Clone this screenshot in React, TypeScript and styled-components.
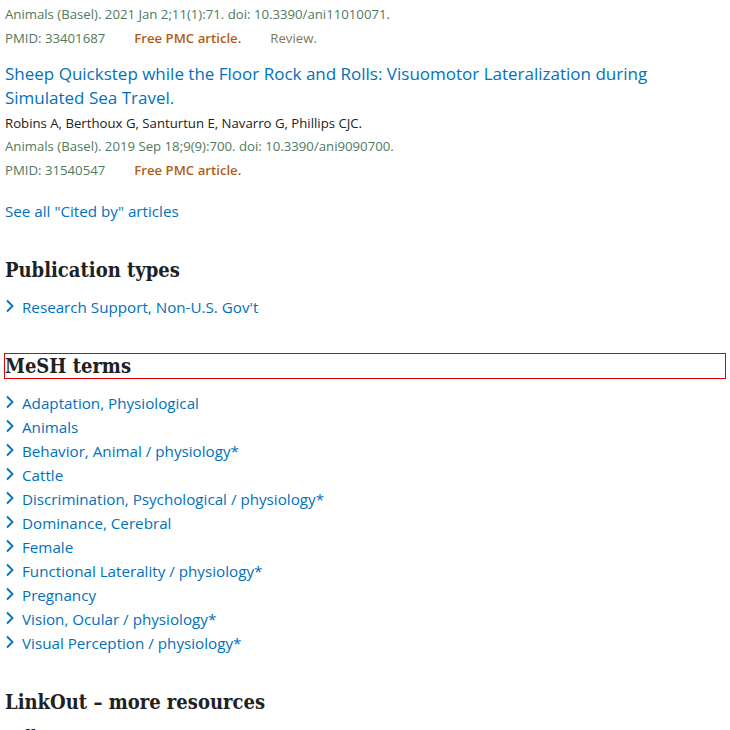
import React from "react";
import styled, { createGlobalStyle } from "styled-components";

const GlobalStyle = createGlobalStyle`
  html, body {
    margin: 0;
    padding: 0;
    background: #fff;
  }
  body {
    font-family: "Open Sans", "Noto Sans", sans-serif;
    color: #212121;
  }
`;

const citedBy = [
  {
    journal: "Animals (Basel). 2021 Jan 2;11(1):71. doi: 10.3390/ani11010071.",
    pmid: "33401687",
    review: true,
  },
  {
    title:
      "Sheep Quickstep while the Floor Rock and Rolls: Visuomotor Lateralization during Simulated Sea Travel.",
    authors: "Robins A, Berthoux G, Santurtun E, Navarro G, Phillips CJC.",
    journal: "Animals (Basel). 2019 Sep 18;9(9):700. doi: 10.3390/ani9090700.",
    pmid: "31540547",
    review: false,
  },
];

const meshTerms = [
  "Adaptation, Physiological",
  "Animals",
  "Behavior, Animal / physiology*",
  "Cattle",
  "Discrimination, Psychological / physiology*",
  "Dominance, Cerebral",
  "Female",
  "Functional Laterality / physiology*",
  "Pregnancy",
  "Vision, Ocular / physiology*",
  "Visual Perception / physiology*",
];

const Chevron = () => (
  <ChevronIcon viewBox="0 0 10 14" width="10" height="14">
    <path d="M2 1.5 L7.5 7 L2 12.5" fill="none" stroke="#0071bc" strokeWidth="1.8" />
  </ChevronIcon>
);

export default function App() {
  return (
    <>
      <GlobalStyle />
      <Page>
        {citedBy.map((c, i) => (
          <Citation key={i}>
            {c.title && <CitationTitle href="#">{c.title}</CitationTitle>}
            {c.authors && <Authors>{c.authors}</Authors>}
            <Journal>{c.journal}</Journal>
            <MetaRow>
              <span>PMID: {c.pmid}</span>
              <FreeLabel>Free PMC article.</FreeLabel>
              {c.review && <ReviewLabel>Review.</ReviewLabel>}
            </MetaRow>
          </Citation>
        ))}
        <SeeAll href="#">See all "Cited by" articles</SeeAll>

        <Section>
          <Heading>Publication types</Heading>
          <TermList>
            <Term>
              <Chevron />
              <TermLink href="#">Research Support, Non-U.S. Gov't</TermLink>
            </Term>
          </TermList>
        </Section>

        <Section>
          <Heading $focused>MeSH terms</Heading>
          <TermList>
            {meshTerms.map((t) => (
              <Term key={t}>
                <Chevron />
                <TermLink href="#">{t}</TermLink>
              </Term>
            ))}
          </TermList>
        </Section>

        <Section>
          <Heading>LinkOut – more resources</Heading>
          <SubHeading>Full Text Sources</SubHeading>
        </Section>
      </Page>
    </>
  );
}

const Page = styled.div`
  padding: 3px 5px 0;
  width: 720px;
`;

const Citation = styled.div`
  display: flex;
  flex-direction: column;
  margin-bottom: 12px;
`;

const CitationTitle = styled.a`
  font-size: 17px;
  line-height: 24px;
  color: #0071bc;
  text-decoration: none;
  margin-bottom: 1px;
`;

const Authors = styled.div`
  font-size: 13.2px;
  line-height: 24px;
  color: #212121;
`;

const Journal = styled.div`
  font-size: 13.2px;
  line-height: 24px;
  color: #4f7a5b;
  margin-top: -1px;
`;

const MetaRow = styled.div`
  display: flex;
  gap: 29px;
  font-size: 13.2px;
  line-height: 24px;
  color: #4f7a5b;
`;

const FreeLabel = styled.span`
  color: #b35b16;
  font-weight: 600;
`;

const ReviewLabel = styled.span`
  color: #7d7a55;
`;

const SeeAll = styled.a`
  display: block;
  margin-top: 17px;
  font-size: 15.2px;
  line-height: 24px;
  color: #0071bc;
  text-decoration: none;
`;

const Section = styled.section`
  margin-top: 35px;
`;

const Heading = styled.h2<{ $focused?: boolean }>`
  margin: 0 0 13px;
  font-family: "DejaVu Serif Condensed", "DejaVu Serif", "Liberation Serif", serif;
  font-stretch: condensed;
  font-size: 20px;
  font-weight: bold;
  line-height: 24px;
  color: #212121;
  outline: ${(p) => (p.$focused ? "1px solid #e00000" : "none")};
`;

const SubHeading = styled.h3`
  margin: 12px 0 0;
  font-family: "DejaVu Serif Condensed", "DejaVu Serif", "Liberation Serif", serif;
  font-stretch: condensed;
  font-size: 16px;
  font-weight: bold;
`;

const TermList = styled.ul`
  list-style: none;
  margin: 0;
  padding: 0;
`;

const Term = styled.li`
  display: flex;
  align-items: center;
  gap: 7px;
  height: 24px;
`;

const ChevronIcon = styled.svg`
  flex: none;
  margin-top: -2px;
`;

const TermLink = styled.a`
  font-size: 15.2px;
  color: #0071bc;
  text-decoration: none;
`;
